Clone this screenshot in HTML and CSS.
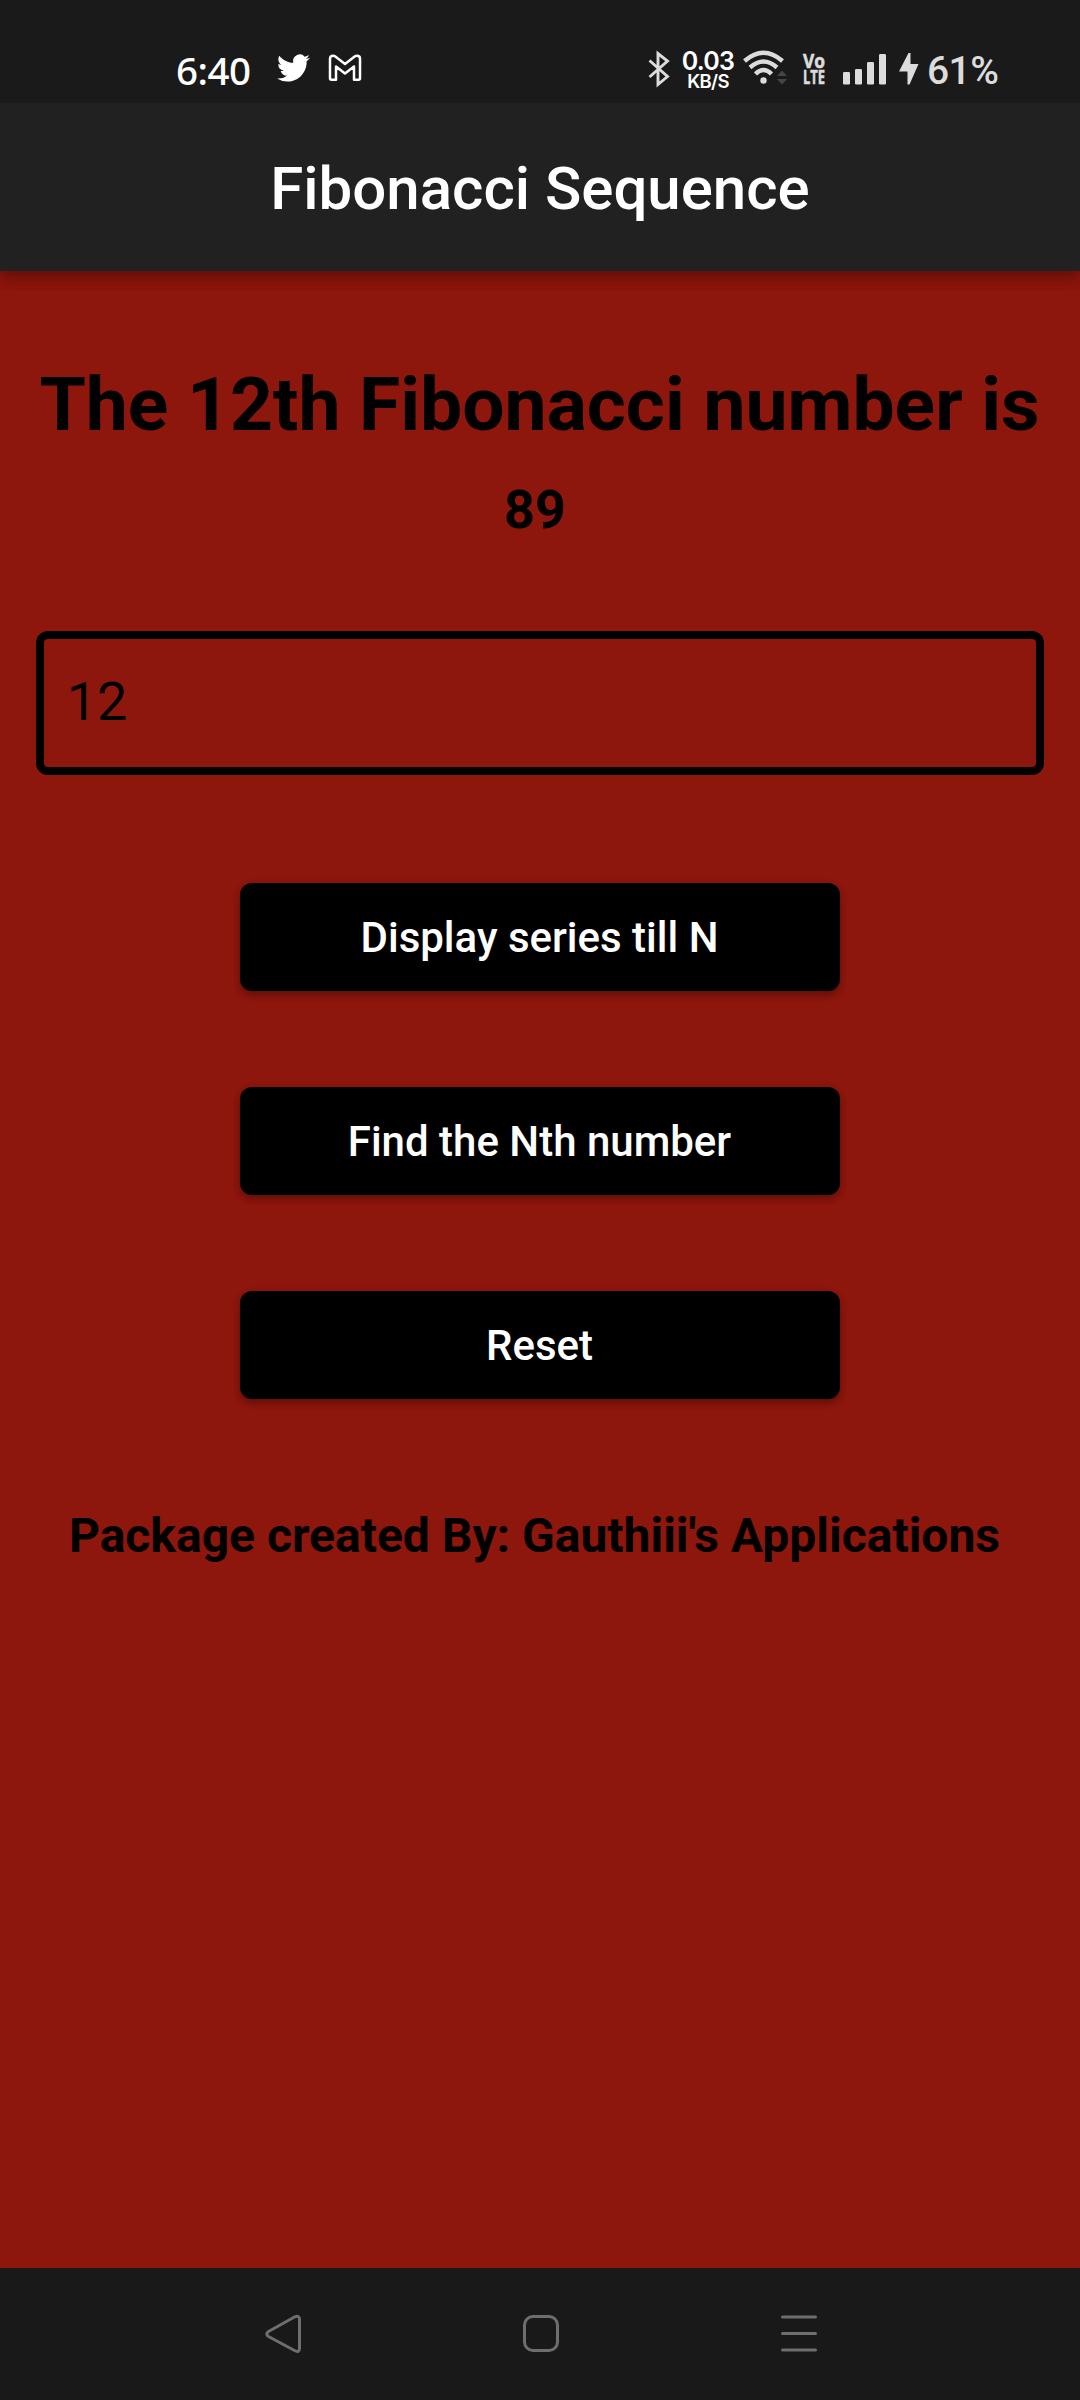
FILE: index.html
```html
<!DOCTYPE html>
<html lang="en">
<head>
<meta charset="utf-8">
<title>Fibonacci Sequence</title>
<link rel="stylesheet" href="styles.css">
</head>
<body>
<div class="status">
  <div class="status-left">
    <span class="time">6:40</span>
    <svg class="twitter" width="33" height="28" viewBox="0 1.9 24 20.2" preserveAspectRatio="none"><path fill="#fff" d="M23.953 4.57a10 10 0 01-2.825.775 4.958 4.958 0 002.163-2.723c-.951.555-2.005.959-3.127 1.184a4.92 4.92 0 00-8.384 4.482C7.69 8.095 4.067 6.13 1.64 3.162a4.822 4.822 0 00-.666 2.475c0 1.71.87 3.213 2.188 4.096a4.904 4.904 0 01-2.228-.616v.06a4.923 4.923 0 003.946 4.827 4.996 4.996 0 01-2.212.085 4.936 4.936 0 004.604 3.417 9.867 9.867 0 01-6.102 2.105c-.39 0-.779-.023-1.17-.067a13.995 13.995 0 007.557 2.209c9.053 0 13.998-7.496 13.998-13.985 0-.21 0-.42-.015-.63A9.935 9.935 0 0024 4.59z"/></svg>
    <svg class="gmail" width="34" height="28" viewBox="0 0 34 28"><path fill="none" stroke="#fff" stroke-width="2.500" stroke-linejoin="round" d="M2 4.500Q2.200 1.700 5 1.700Q6.200 1.700 7 2.300L17 10L27 2.300Q27.800 1.700 29 1.700Q32 1.700 32 4.500V24.300Q32 25.800 30.500 25.800H26V12.500L17 19.500L8 12.500V25.800H3.500Q2 25.800 2 24.300Z"/></svg>
  </div>
  <div class="status-right">
    <svg class="bluetooth" width="22" height="36" viewBox="0 0 22 36"><path fill="none" stroke="#dcdcdc" stroke-width="2.900" d="M1.500 9.500L19.500 25.500L10 33.500V2.500L19.500 10L1.500 26"/></svg>
    <span class="speed"><span class="rate">0.03</span><span class="unit">KB/S</span></span>
    <svg class="wifi" width="46" height="36" viewBox="0 0 46 36"><g fill="none" stroke="#dcdcdc" stroke-width="4.400"><path d="M1.500 11Q20.500 -5.500 39.500 11"/><path d="M7 17.500Q20.500 5.500 34 17.500"/><path d="M12.500 24Q20.500 16 28.500 24"/></g><circle cx="20.500" cy="30.500" r="3.200" fill="#dcdcdc"/><path fill="#454545" d="M34 26L39 20.500L44 26ZM34 29H44L39 34.500Z"/></svg>
    <svg class="volte" width="24" height="32" viewBox="0 0 24 32"><text x="0" y="14.500" textLength="22" lengthAdjust="spacingAndGlyphs">Vo</text><text x="0" y="31" textLength="22" lengthAdjust="spacingAndGlyphs">LTE</text></svg>
    <svg class="signal" width="44" height="31" viewBox="0 0 44 31" fill="#dcdcdc"><rect y="18" width="7" height="12.500" rx="1.200"/><rect x="12" y="15" width="7" height="15.500" rx="1.200"/><rect x="24" y="8" width="7" height="22.500" rx="1.200"/><rect x="36" width="7" height="30.500" rx="1.200"/></svg>
    <svg class="bolt" width="20" height="32" viewBox="0 0 20 32"><path fill="#dcdcdc" d="M9.500 0L0 18.500H8.500V31.500H10.500L19.500 11H11.500V0Z"/></svg>
    <span class="battery">61%</span>
  </div>
</div>
<header class="appbar">Fibonacci Sequence</header>
<main class="content">
  <h1 class="heading">The 12th Fibonacci number is</h1>
  <p class="result">89</p>
  <input class="field" type="text" value="12">
  <div class="actions">
    <button class="btn">Display series till N</button>
    <button class="btn">Find the Nth number</button>
    <button class="btn">Reset</button>
  </div>
  <p class="credit">Package created By: Gauthiii's Applications</p>
</main>
<nav class="navbar">
  <svg width="38" height="44" viewBox="0 0 38 44"><path d="M4.500 18.500L30.500 4Q35.500 1.800 35.500 6.500V35.500Q35.500 40 30.500 37.500L4.500 23.500Q1 21 4.500 18.500Z"/></svg>
  <svg width="38" height="44" viewBox="0 0 38 44"><rect x="2.500" y="3.500" width="33" height="34" rx="8.500"/></svg>
  <svg width="38" height="44" viewBox="0 0 38 44"><path d="M2.500 4H35.500M2.500 20.500H35.500M2.500 37H35.500"/></svg>
</nav>
</body>
</html>
```
FILE: styles.css
```css
* { box-sizing: border-box; }
body {
  margin: 0;
  height: 2400px;
  display: flex;
  flex-direction: column;
  background: #8d160d;
  color: #000;
  font-family: Roboto, sans-serif;
}
.status {
  position: relative;
  z-index: 1;
  height: 103px;
  padding: 50px 0 0 176px;
  display: flex;
  background: #1a1a1a;
  color: #dcdcdc;
}
svg { display: block; flex: none; overflow: visible; }
.status-left, .status-right { display: flex; align-items: flex-start; }
.status-left { width: 472px; color: #fff; }
.time {
  width: 101px;
  font: 500 38.5px/40px "Noto Sans", sans-serif;
  letter-spacing: -0.5px;
}
.twitter { margin-top: 4px; }
.gmail { margin: 4px 0 0 18px; }
.bluetooth { margin-top: 1px; }
.speed {
  width: 60px;
  margin-left: 8px;
  display: flex;
  flex-direction: column;
  align-items: center;
  color: #fff;
  font-family: Inter, sans-serif;
}
.rate { padding-top: 1px; font-size: 25px; line-height: 21px; font-weight: 600; letter-spacing: -0.7px; }
.unit { font-size: 18.5px; line-height: 18px; font-weight: 600; letter-spacing: -0.7px; }
.wifi { margin-left: 5px; }
.volte { margin: 3px 0 0 14px; fill: #dcdcdc; stroke: #dcdcdc; stroke-width: 0.6px; font: 700 19.5px "Open Sans", sans-serif; }
.signal { margin: 4px 0 0 16px; }
.bolt { margin: 3px 0 0 12px; }
.battery {
  margin-left: 8px;
  font-size: 39px;
  font-weight: 500;
  line-height: 42px;
  letter-spacing: -0.6px;
}
.appbar {
  height: 168px;
  padding-top: 2px;
  display: flex;
  align-items: center;
  justify-content: center;
  background: #212121;
  color: #fff;
  font-size: 60px;
  font-weight: 500;
  box-shadow: 0 6px 12px -3px rgba(0,0,0,.2), 0 9px 12px rgba(0,0,0,.12), 0 3px 20px rgba(0,0,0,.08);
}
.content {
  flex: 1;
  padding: 89px 36px 0;
  display: flex;
  flex-direction: column;
  align-items: center;
}
.heading { margin: 0 1px 0 0; font-size: 75px; line-height: 88px; font-weight: 700; white-space: nowrap; }
.result { margin: 30px 10px 0 0; font-size: 54px; line-height: 64px; font-weight: 700; }
.field {
  width: 1008px;
  height: 144px;
  margin-top: 89px;
  padding: 0 24px 3px 23px;
  border: 8px solid #000;
  border-radius: 12px;
  background: transparent;
  color: #000;
  font: 400 54px Roboto, sans-serif;
}
.actions { margin-top: 108px; display: flex; flex-direction: column; gap: 96px; }
.btn {
  width: 600px;
  height: 108px;
  padding: 0 1px 0 0;
  border: 0;
  border-radius: 12px;
  background: #000;
  color: #fff;
  font: 500 42px Roboto, sans-serif;
  box-shadow: 0 4px 6px rgba(0,0,0,.25), 0 2px 8px rgba(0,0,0,.1);
}
.credit { margin: 109px 11px 0 0; font-size: 48px; line-height: 56px; font-weight: 700; white-space: nowrap; }
.navbar {
  height: 132px;
  padding: 45px 262px 0 264px;
  display: flex;
  justify-content: space-between;
  background: #191919;
}
.navbar svg { fill: none; stroke: #6e6e6e; stroke-width: 3; stroke-linecap: round; stroke-linejoin: round; }
```
